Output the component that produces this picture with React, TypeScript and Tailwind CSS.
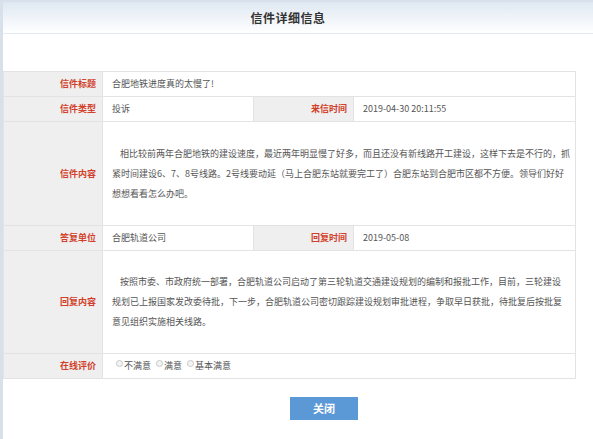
import React from "react";

const font = { fontFamily: '"Noto Sans CJK SC", "Liberation Sans", sans-serif' };

const Label = ({ children, className = "" }: { children: React.ReactNode; className?: string }) => (
  <td className={`bg-[#efefef] border border-[#e3e3e3] text-right pr-[6px] text-[9px] font-bold text-[#d2402a] ${className}`}>
    {children}
  </td>
);

const Value = ({ children, colSpan, className = "" }: { children: React.ReactNode; colSpan?: number; className?: string }) => (
  <td colSpan={colSpan} className={`bg-white border border-[#e3e3e3] pl-[9px] text-[9px] text-[#555] ${className}`}>
    {children}
  </td>
);

const Radio = ({ label }: { label: string }) => (
  <span className="inline-flex items-center gap-[1px] mr-[5px]">
    <span className="w-[7px] h-[7px] rounded-full border border-[#c8c8c8] bg-[#f4f4f4] -translate-y-[2px]"></span>
    <span>{label}</span>
  </span>
);

export default function App() {
  return (
    <div className="w-[593px] h-[439px] bg-white border-l-[3px] border-t-[2px] border-[#d8e1eb] overflow-hidden" style={font}>
      <div className="h-[32px] bg-gradient-to-b from-[#dfe8f2] to-white border-b border-[#e4e9ef] flex items-center justify-center">
        <h1 className="text-[12px] font-bold text-[#333] tracking-[0.5px] -translate-x-[10px]">信件详细信息</h1>
      </div>

      <div className="pt-[37px]">
        <table className="w-[573px] border-collapse table-fixed">
          <colgroup>
            <col className="w-[99px]" />
            <col className="w-[151px]" />
            <col className="w-[100px]" />
            <col />
          </colgroup>
          <tbody>
            <tr className="h-[25px]">
              <Label>信件标题</Label>
              <Value colSpan={3} className="text-[#444]">合肥地铁进度真的太慢了!</Value>
            </tr>
            <tr className="h-[25px]">
              <Label>信件类型</Label>
              <Value>投诉</Value>
              <Label>来信时间</Label>
              <Value>2019-04-30 20:11:55</Value>
            </tr>
            <tr className="h-[104px]">
              <Label>信件内容</Label>
              <Value colSpan={3} className="leading-[20px] whitespace-nowrap">
                <div className="indent-[8px]">相比较前两年合肥地铁的建设速度，最近两年明显慢了好多，而且还没有新线路开工建设，这样下去是不行的，抓</div>
                <div>紧时间建设6、7、8号线路。2号线要动延（马上合肥东站就要完工了）合肥东站到合肥市区都不方便。领导们好好</div>
                <div>想想看看怎么办吧。</div>
              </Value>
            </tr>
            <tr className="h-[25px]">
              <Label>答复单位</Label>
              <Value>合肥轨道公司</Value>
              <Label>回复时间</Label>
              <Value>2019-05-08</Value>
            </tr>
            <tr className="h-[103px]">
              <Label>回复内容</Label>
              <Value colSpan={3} className="leading-[20px] whitespace-nowrap">
                <div className="indent-[8px]">按照市委、市政府统一部署，合肥轨道公司启动了第三轮轨道交通建设规划的编制和报批工作，目前，三轮建设</div>
                <div>规划已上报国家发改委待批，下一步，合肥轨道公司密切跟踪建设规划审批进程，争取早日获批，待批复后按批复</div>
                <div>意见组织实施相关线路。</div>
              </Value>
            </tr>
            <tr className="h-[25px]">
              <Label>在线评价</Label>
              <Value colSpan={3} className="pl-[13px]">
                <Radio label="不满意" />
                <Radio label="满意" />
                <Radio label="基本满意" />
              </Value>
            </tr>
          </tbody>
        </table>

        <div className="flex justify-center pt-[18px] pl-[52px]">
          <button className="w-[68px] h-[23px] bg-[#5b99d6] text-white text-[11px] font-bold">关闭</button>
        </div>
      </div>
    </div>
  );
}
